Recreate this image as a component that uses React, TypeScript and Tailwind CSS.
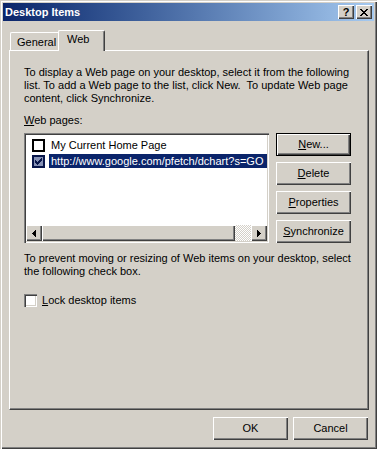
import React from "react";

const face = "bg-[#d4d0c8]";
const raised =
  "shadow-[inset_1px_1px_#ffffff,inset_-1px_-1px_#404040,inset_-2px_-2px_#808080]";
const sunken =
  "shadow-[inset_1px_1px_#808080,inset_2px_2px_#404040,inset_-1px_-1px_#ffffff,inset_-2px_-2px_#d4d0c8]";

function U({ children }: { children: React.ReactNode }) {
  return <span className="underline underline-offset-[1px]">{children}</span>;
}

function Button({
  children,
  isDefault,
  className = "",
}: {
  children: React.ReactNode;
  isDefault?: boolean;
  className?: string;
}) {
  return (
    <div
      className={`w-[75px] h-[23px] ${face} ${isDefault ? "border border-black" : ""} ${className}`}
    >
      <div className={`w-full h-full flex items-center justify-center ${raised}`}>
        <span className="leading-[13px]">{children}</span>
      </div>
    </div>
  );
}

function Arrow({ dir }: { dir: "left" | "right" }) {
  return (
    <div className={`w-[16px] h-[16px] ${face} ${raised} flex items-center justify-center shrink-0`}>
      <svg width="4" height="7" viewBox="0 0 4 7" shapeRendering="crispEdges">
        {dir === "left" ? (
          <path d="M3 0h1v7h-1zM2 1h1v5h-1zM1 2h1v3h-1zM0 3h1v1h-1z" fill="#000" />
        ) : (
          <path d="M0 0h1v7h-1zM1 1h1v5h-1zM2 2h1v3h-1zM3 3h1v1h-1z" fill="#000" />
        )}
      </svg>
    </div>
  );
}

function CheckMark({ color }: { color: string }) {
  return (
    <svg width="7" height="7" viewBox="0 0 7 7" shapeRendering="crispEdges">
      <path
        d="M6 0h1v3h-1zM5 1h1v3h-1zM4 2h1v3h-1zM3 3h1v3h-1zM2 4h1v3h-1zM1 3h1v3h-1zM0 2h1v3h-1z"
        fill={color}
      />
    </svg>
  );
}

export default function App() {
  return (
    <div
      className={`w-[377px] h-[449px] ${face} p-[3px] flex flex-col text-[11px] text-black shadow-[inset_1px_1px_#d4d0c8,inset_2px_2px_#ffffff,inset_-1px_-1px_#404040,inset_-2px_-2px_#808080]`}
      style={{ fontFamily: "'Liberation Sans', Arial, sans-serif" }}
    >
      {/* title bar */}
      <div className="h-[18px] flex items-center justify-between bg-gradient-to-r from-[#0a246a] to-[#a6caf0] pl-[2px] pr-[2px]">
        <span className="text-white font-bold leading-[13px]">Desktop Items</span>
        <div className="flex">
          <div className={`w-[16px] h-[14px] ${face} ${raised} flex items-center justify-center font-bold text-[11px] leading-[11px]`}>
            ?
          </div>
          <div className={`w-[16px] h-[14px] ml-[2px] ${face} ${raised} flex items-center justify-center`}>
            <svg width="8" height="7" viewBox="0 0 8 7" shapeRendering="crispEdges">
              <path
                d="M0 0h2v1h-2zM6 0h2v1h-2zM1 1h2v1h-2zM5 1h2v1h-2zM2 2h4v1h-4zM3 3h2v1h-2zM2 4h4v1h-4zM1 5h2v1h-2zM5 5h2v1h-2zM0 6h2v1h-2zM6 6h2v1h-2z"
                fill="#000"
              />
            </svg>
          </div>
        </div>
      </div>

      {/* tabs */}
      <div className="ml-[6px] mt-[9px] h-[20px] flex items-end relative z-10">
        <div className="ml-[1px] h-[18px] w-[50px] border-l border-t border-white rounded-tl-[2px] pl-[6px] pt-[3px] leading-[13px] shadow-[inset_-1px_0_#808080]">
          General
        </div>
        <div
          className={`-ml-[2px] h-[21px] -mb-[1px] w-[47px] ${face} border-l border-t border-white rounded-tl-[2px] rounded-tr-[2px] border-r border-r-[#404040] pl-[8px] pt-[2px] leading-[13px] shadow-[inset_-1px_0_#808080]`}
        >
          Web
        </div>
      </div>

      {/* tab panel */}
      <div className="ml-[6px] w-[360px] h-[360px] border-l border-t border-white border-r border-b border-r-[#404040] border-b-[#404040] shadow-[inset_-1px_-1px_#808080] pl-[14px] pt-[15px]">
        <p className="leading-[13px] whitespace-pre">
          {"To display a Web page on your desktop, select it from the following\nlist. To add a Web page to the list, click New.  To update Web page\ncontent, click Synchronize."}
        </p>
        <p className="leading-[13px] mt-[9px]">
          <U>W</U>eb pages:
        </p>

        <div className="flex mt-[6px]">
          {/* listbox */}
          <div className={`w-[245px] h-[110px] bg-white ${sunken} p-[2px] flex flex-col`}>
            <div className="flex-1 overflow-hidden pt-[2px]">
              <div className="flex items-center h-[16px] pl-[6px]">
                <div className="w-[13px] h-[13px] border-2 border-black bg-white shrink-0" />
                <span className="ml-[6px] leading-[13px] whitespace-nowrap">My Current Home Page</span>
              </div>
              <div className="flex items-center h-[16px] pl-[6px]">
                <div className="w-[13px] h-[13px] border-2 border-[#06154a] bg-[#8591b5] shrink-0 flex items-center justify-center">
                  <CheckMark color="#06154a" />
                </div>
                <span className="ml-[4px] pl-[2px] flex-1 min-w-0 h-[14px] leading-[14px] bg-[#0a246a] text-white whitespace-nowrap overflow-hidden">
                  http://www.google.com/pfetch/dchart?s=GO
                </span>
              </div>
            </div>
            {/* horizontal scrollbar */}
            <div className="h-[16px] flex">
              <Arrow dir="left" />
              <div className={`w-[193px] h-[16px] ${face} ${raised}`} />
              <div className="flex-1 h-[16px] bg-[repeating-conic-gradient(#d4d0c8_0%_25%,#ffffff_0%_50%)] [background-size:2px_2px]" />
              <Arrow dir="right" />
            </div>
          </div>

          {/* side buttons */}
          <div className="ml-[7px] flex flex-col gap-[6px]">
            <Button isDefault>
              <U>N</U>ew...
            </Button>
            <Button>
              <U>D</U>elete
            </Button>
            <Button>
              <U>P</U>roperties
            </Button>
            <Button>
              <U>S</U>ynchronize
            </Button>
          </div>
        </div>

        <p className="leading-[13px] mt-[9px] whitespace-pre">
          {"To prevent moving or resizing of Web items on your desktop, select\nthe following check box."}
        </p>

        <div className="flex items-center mt-[16px]">
          <div className={`w-[13px] h-[13px] bg-white ${sunken}`} />
          <span className="ml-[5px] leading-[13px]">
            <U>L</U>ock desktop items
          </span>
        </div>
      </div>

      {/* bottom buttons */}
      <div className="flex justify-end gap-[5px] mt-[7px] mr-[6px]">
        <Button>OK</Button>
        <Button>Cancel</Button>
      </div>
    </div>
  );
}
